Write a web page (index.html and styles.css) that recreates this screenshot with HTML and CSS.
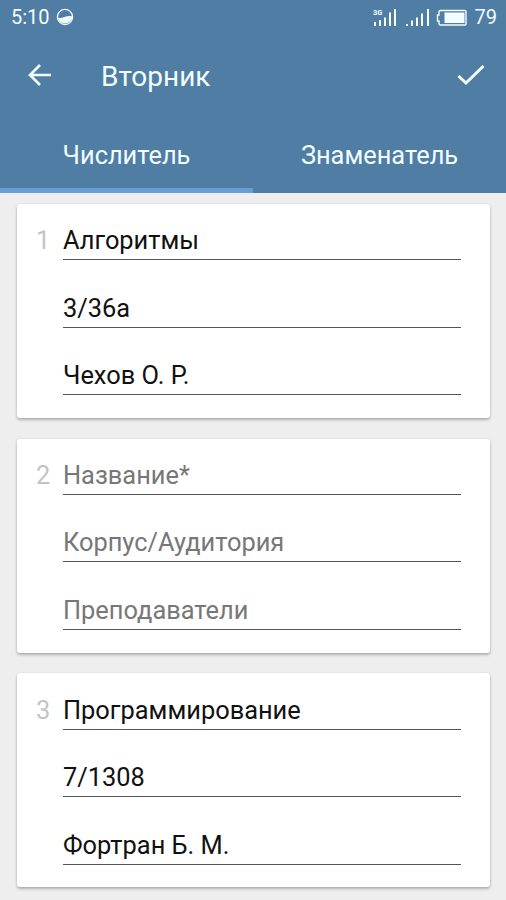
FILE: index.html
```html
<!DOCTYPE html>
<html lang="ru">
<head>
<meta charset="utf-8">
<title>Вторник</title>
<link rel="stylesheet" href="styles.css">
</head>
<body>
<header class="header">
  <div class="status">
    <span class="clock">5:10</span>
    <svg class="moon" width="18" height="18" viewBox="0 0 18 18"><circle cx="9" cy="9" r="7.6" fill="none" stroke="currentColor" stroke-width="1.3"/><path d="M1.500 9.500C4 10.500 6 9.800 8.500 9S13.500 7.700 16.500 8.500A7.600 7.600 0 0 1 1.500 9.500Z" fill="currentColor"/></svg>
    <svg class="signals" width="94" height="20" viewBox="0 0 94 20" fill="currentColor">
      <text class="net" x="0" y="7.5">3G</text>
      <path d="M1 15h2v4H1zM6 13h2v6H6zM11 10.500h2V19h-2zM16 5.500h2V19h-2zM21 2h2v17h-2zM33 17h2v2h-2zM38 13.500h2V19h-2zM43 10.500h2V19h-2zM48 6.500h2V19h-2zM54 2h2v17h-2z"/>
      <path d="M67.500 3.500h24.500q1 0 1 1v12.500q0 1-1 1H67.500q-1.500 0-1.500-1.500v-2.500h-1.500V8H66V5q0-1.500 1.500-1.500Z" fill="none" stroke="currentColor" stroke-width="1.400"/>
      <path d="M71.500 5.500h20v10.500h-20z"/>
    </svg>
    <span class="battery">79</span>
  </div>
  <div class="toolbar">
    <svg class="back" width="26" height="26" viewBox="0 0 26 26"><path d="M24 12H3M13 2 3 12l10 10" fill="none" stroke="currentColor" stroke-width="2.700"/></svg>
    <h1 class="title">Вторник</h1>
    <svg class="done" width="30" height="24" viewBox="0 0 30 24"><path d="M2.500 12 10 19 27.500 2" fill="none" stroke="currentColor" stroke-width="3"/></svg>
  </div>
  <nav class="tabs">
    <div class="tab tab-active">Числитель</div>
    <div class="tab">Знаменатель</div>
  </nav>
</header>
<main class="list">
  <section class="card">
    <div class="number">1</div>
    <div class="fields">
      <div class="field">Алгоритмы</div>
      <div class="field">3/36а</div>
      <div class="field">Чехов О. Р.</div>
    </div>
  </section>
  <section class="card">
    <div class="number">2</div>
    <div class="fields hint">
      <div class="field">Название*</div>
      <div class="field">Корпус/Аудитория</div>
      <div class="field">Преподаватели</div>
    </div>
  </section>
  <section class="card">
    <div class="number">3</div>
    <div class="fields">
      <div class="field">Программирование</div>
      <div class="field">7/1308</div>
      <div class="field">Фортран Б. М.</div>
    </div>
  </section>
</main>
</body>
</html>
```
FILE: styles.css
```css
* { box-sizing: border-box; }
body {
  margin: 0;
  height: 900px;
  overflow: hidden;
  background: #eee;
  color: #111;
  font-family: Roboto, "Liberation Sans", sans-serif;
}
.header {
  height: 193px;
  background: #507da3;
  color: #f2fdff;
}
.status {
  height: 34px;
  padding: 0 9px 0 11px;
  display: flex;
  align-items: center;
  font-size: 20px;
}
.clock { width: 45px; }
.signals { margin-left: auto; margin-right: 8px; }
.net { font-size: 7.500px; font-weight: 700; }
.toolbar {
  height: 83px;
  padding: 0 20px 0 27px;
  display: flex;
  align-items: center;
}
.title {
  margin: 0 auto 0 48px;
  padding-top: 2px;
  font-size: 28px;
  font-weight: 400;
  line-height: 32px;
}
.tabs {
  height: 76px;
  display: grid;
  grid-template-columns: 1fr 1fr;
}
.tab {
  padding-top: 23px;
  text-align: center;
  font-size: 25.400px;
  line-height: 30px;
}
.tab-active { border-bottom: 5px solid #67a0d0; }
.list {
  padding: 11px 16.500px 0;
  display: grid;
  gap: 20.700px;
}
.card {
  height: 214px;
  padding: 21.200px 28.500px 0 19.500px;
  display: flex;
  background: #fff;
  border-radius: 3px;
  box-shadow: 0 2px 3px rgba(0, 0, 0, .25), 0 0 2px rgba(0, 0, 0, .12);
  font-size: 25.400px;
  line-height: 30px;
}
.number { width: 27px; color: #c4c4c4; }
.fields {
  flex: 1;
  display: flex;
  flex-direction: column;
  gap: 32.400px;
}
.field {
  height: 35.100px;
  border-bottom: 1px solid #555;
  white-space: nowrap;
}
.hint { color: #777; }
```
